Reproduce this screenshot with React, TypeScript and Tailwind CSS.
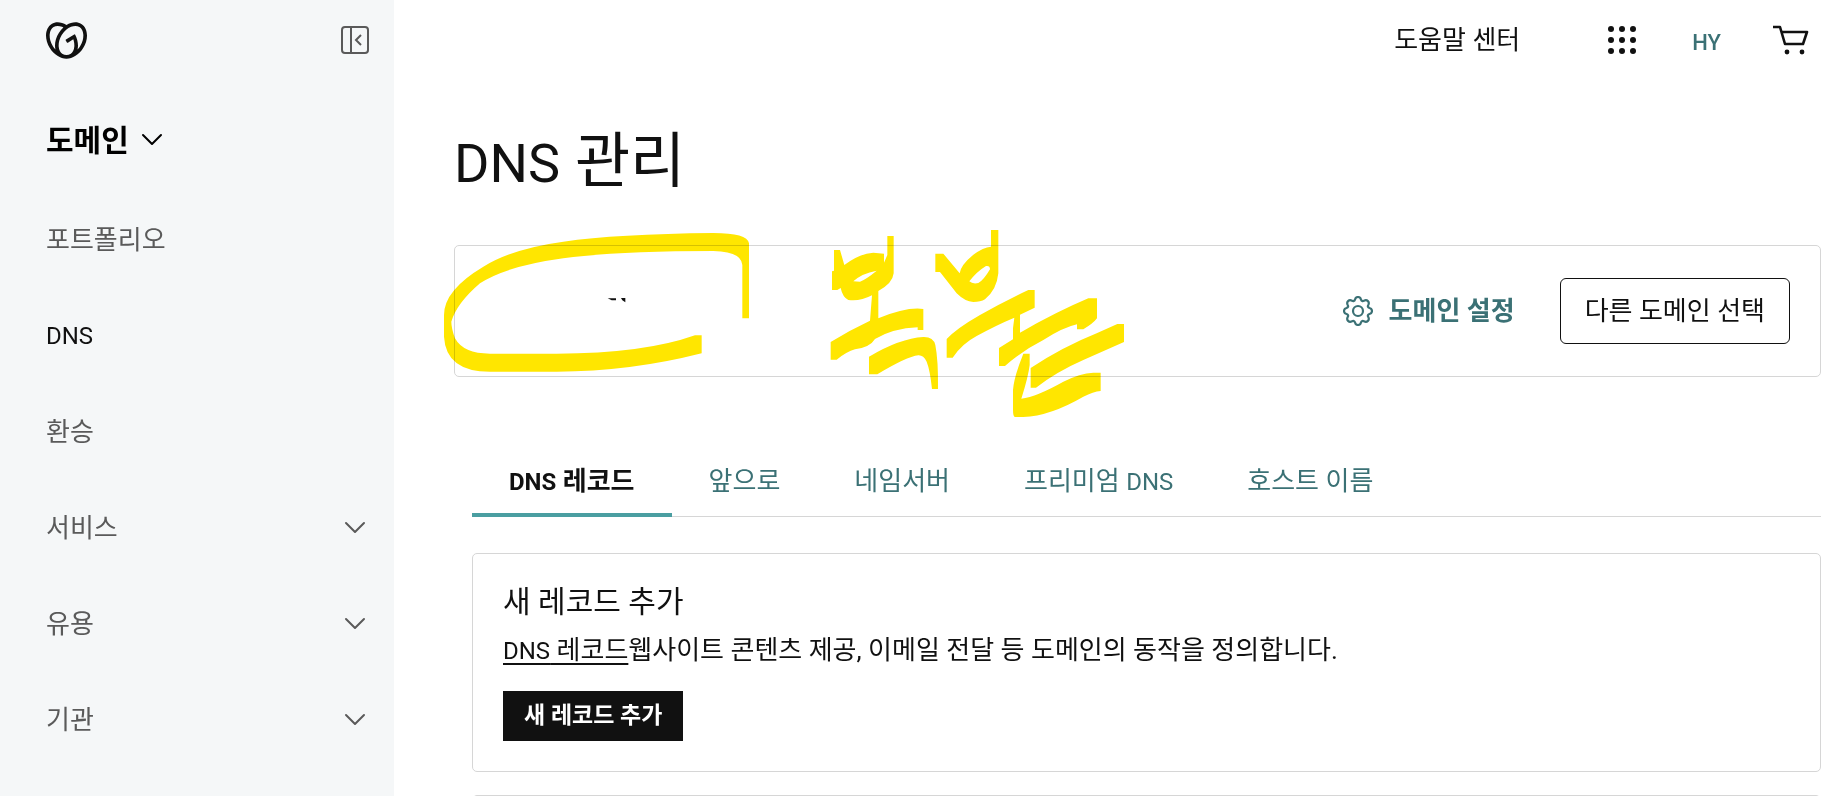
import { SiGodaddy } from "react-icons/si";

const menuItems = [
  { label: "포트폴리오" },
  { label: "DNS", active: true },
  { label: "환승" },
  { label: "서비스", expandable: true },
  { label: "유용", expandable: true },
  { label: "기관", expandable: true },
];

const tabs = [
  { id: "records", label: <><Dns /> 레코드</> },
  { id: "forwarding", label: "앞으로" },
  { id: "nameservers", label: "네임서버" },
  { id: "premium", label: <>프리미엄 <Dns /></> },
  { id: "hostnames", label: "호스트 이름" },
];

// Latin letters run larger than Hangul at the same size
function Dns() {
  return <span className="text-2xl">DNS</span>;
}

const ChevronDown = () => (
  <svg width="22" height="14" viewBox="0 0 22 14" fill="none" stroke="currentColor" strokeWidth="2" strokeLinecap="round" strokeLinejoin="round" aria-hidden="true">
    <path d="M2 2l9 9 9-9" />
  </svg>
);

const CollapseIcon = () => (
  <svg width="28" height="28" viewBox="0 0 28 28" fill="none" stroke="currentColor" strokeWidth="2" aria-hidden="true">
    <rect x="1" y="1" width="26" height="26" rx="3" />
    <path d="M10 1v26" />
    <path d="M20 9l-5 5 5 5" />
  </svg>
);

const GridIcon = () => (
  <svg width="28" height="28" viewBox="0 0 28 28" fill="currentColor" aria-hidden="true">
    {[3, 14, 25].map((cy) =>
      [3, 14, 25].map((cx) => <circle key={`${cx}-${cy}`} cx={cx} cy={cy} r="3" />)
    )}
  </svg>
);

const CartIcon = () => (
  <svg width="36" height="30" viewBox="0 0 36 30" fill="none" stroke="currentColor" strokeWidth="2.6" strokeLinejoin="round" aria-hidden="true">
    <path d="M0 2h7l5 17h18l4-12H9" />
    <circle cx="14" cy="27" r="2.4" fill="currentColor" stroke="none" />
    <circle cx="29" cy="27" r="2.4" fill="currentColor" stroke="none" />
  </svg>
);

const GearIcon = () => (
  <svg width="30" height="30" viewBox="0 0 30 30" fill="none" stroke="currentColor" strokeWidth="2.2" strokeLinejoin="round" aria-hidden="true">
    <circle cx="15" cy="15" r="5" />
    <path d="M12 3.5Q12.5 1 15 1T18 3.5Q19 6 21 4.7Q23.3 3.5 24.9 5.1T25.3 9Q24 11 26.5 12Q29 12.5 29 15T26.5 18Q24 19 25.3 21Q26.5 23.3 24.9 24.9T21 25.3Q19 24 18 26.5Q17.5 29 15 29T12 26.5Q11 24 9 25.3Q6.7 26.5 5.1 24.9T4.7 21Q6 19 3.5 18Q1 17.5 1 15T3.5 12Q6 11 4.7 9Q3.5 6.7 5.1 5.1T9 4.7Q11 6 12 3.5Z" />
  </svg>
);

const Highlighter = () => (
  <svg className="pointer-events-none absolute -left-[25px] -top-[26px] mix-blend-multiply" width="720" height="210" viewBox="430 220 720 210" fill="#ffe600" aria-hidden="true">
    <g transform="translate(430 110) scale(0.33333)">
      <path d="M957 625V400Q952 369 850 369Q560 372 400 395Q250 415 160 470Q42 540 42 615V680Q48 785 180 785H380Q600 785 815 730V676H795Q640 731 380 731H180Q100 731 75 685Q64 655 64 635Q80 580 150 520Q230 468 400 445Q560 423 850 423Q935 425 937 465V625Z" />
      <path fill="#111" d="M533 565H558V571H545ZM573 564H586V577L577 571Z" />
    </g>
    <g transform="translate(810 210) scale(0.33333)" fillRule="evenodd">
      <path d="M72 120H90L103 165Q150 130 190 128L222 131V158L232 135V78H251V190Q248 220 205 243V325Q290 290 340 297V360H323V352Q250 355 195 387Q180 412 135 418Q110 425 80 449H62V396Q120 360 180 332L186 256Q150 275 115 270Q98 262 92 234L82 240H66V184L72 182ZM130 214Q155 190 200 182Q170 207 150 215Z" />
      <path d="M177 440Q270 385 340 381Q370 380 376 405Q385 450 384 537H366Q360 480 350 455Q340 435 325 436Q290 440 202 493H177Z" />
      <path d="M376 131H400L449 190Q452 165 490 134Q520 112 543 110V60H565V190Q560 240 525 268Q512 276 490 276Q465 275 440 250L390 186H376ZM478 214Q500 185 528 168Q540 166 540 178Q520 212 505 219Q488 223 478 214Z" />
      <path d="M410 387Q440 355 510 315Q580 275 655 240H674V293L630 314V368Q740 305 835 265H861V325Q850 340 820 358H801V343Q760 352 700 390Q640 420 585 468H567V414L609 388V355L613 323Q560 345 500 378Q455 402 428 443H410Z" />
      <path d="M662 474Q760 410 860 370L922 342H942V396L820 450Q740 485 678 533H662Z" />
      <path d="M640 431H659V465Q655 500 634 566Q680 560 760 515Q810 490 850 488H872V543Q850 545 820 560Q720 618 640 621H615Q609 620 609 600V540Q612 500 640 431Z" />
    </g>
  </svg>
);

const Sidebar = () => (
  <aside className="flex w-[394px] shrink-0 flex-col bg-[#f5f7f8] pl-[46px] pr-[25px]">
    <div className="flex h-20 items-center justify-between">
      <a href="#" aria-label="GoDaddy">
        <SiGodaddy size={41} />
      </a>
      <button type="button" aria-label="메뉴 접기" className="text-[#5a5a5a]">
        <CollapseIcon />
      </button>
    </div>
    <button type="button" className="mt-3 flex h-24 items-center gap-3 text-[30px] font-bold text-black">
      도메인
      <ChevronDown />
    </button>
    <nav className="mt-1 flex flex-col">
      {menuItems.map((item) => (
        <a
          key={item.label}
          href="#"
          className={`flex h-24 items-center justify-between pr-[3px] ${
            item.active ? "text-2xl text-[#111]" : "text-[26px] text-[#5a5a5a]"
          }`}
        >
          {item.label}
          {item.expandable && <ChevronDown />}
        </a>
      ))}
    </nav>
  </aside>
);

const Header = () => (
  <header className="flex h-20 shrink-0 items-center justify-end pr-3">
    <a href="#" className="mr-[88px] text-[26px]">
      도움말 센터
    </a>
    <button type="button" aria-label="앱" className="mr-14">
      <GridIcon />
    </button>
    <button type="button" className="mr-[52px] pt-1 text-[22px] font-medium text-[#3b7175]">
      HY
    </button>
    <button type="button" aria-label="장바구니">
      <CartIcon />
    </button>
  </header>
);

const App = () => {
  return (
    <div className="flex h-screen overflow-hidden bg-white font-['Roboto','Noto_Sans_CJK_KR',sans-serif] text-[#111]">
      <Sidebar />
      <div className="flex min-w-0 flex-1 flex-col pl-[60px] pr-[21px]">
        <Header />
        <main>
          <h1 className="mt-[42px] text-[60px] leading-[80px]">
            <span className="text-[54px]">DNS</span> 관리
          </h1>

          <section className="relative mt-[41px] flex h-[132px] items-center justify-end rounded-[5px] border border-[#d6d6d6] pr-[30px]">
            <Highlighter />
            <a href="#" className="mr-[45px] flex items-center gap-4 text-[26px] font-bold text-[#3b7175]">
              <GearIcon />
              도메인 설정
            </a>
            <button type="button" className="h-[66px] rounded-md border border-[#111] px-6 text-[26px]">
              다른 도메인 선택
            </button>
          </section>

          <div className="mt-[69px] ml-[18px]">
            <div role="tablist" className="flex h-[71px] border-b border-[#d6d6d6]">
              {tabs.map((tab, i) => (
                <button
                  key={tab.id}
                  type="button"
                  role="tab"
                  aria-selected={i === 0}
                  className={`-mb-px border-b-4 px-[37px] pt-1 text-[26px] ${
                    i === 0
                      ? "border-[#4a9ea1] font-bold"
                      : "border-transparent text-[#3b7175]"
                  }`}
                >
                  {tab.label}
                </button>
              ))}
            </div>

            <section className="mt-9 rounded-[5px] border border-[#d6d6d6] px-[30px] pt-6 pb-[30px]">
              <h2 className="text-[30px] leading-[48px]">새 레코드 추가</h2>
              <p className="text-[26px] leading-[48px]">
                <a href="#" className="underline decoration-2 underline-offset-4">
                  <Dns /> 레코드
                </a>
                웹사이트 콘텐츠 제공, 이메일 전달 등 도메인의 동작을 정의합니다.
              </p>
              <button type="button" className="mt-[17px] h-[50px] bg-[#111] px-[21px] text-[23px] font-bold text-white">
                새 레코드 추가
              </button>
            </section>

            <section className="mt-[23px] h-24 rounded-[5px] border border-[#d6d6d6]" />
          </div>
        </main>
      </div>
    </div>
  );
};

export default App;
